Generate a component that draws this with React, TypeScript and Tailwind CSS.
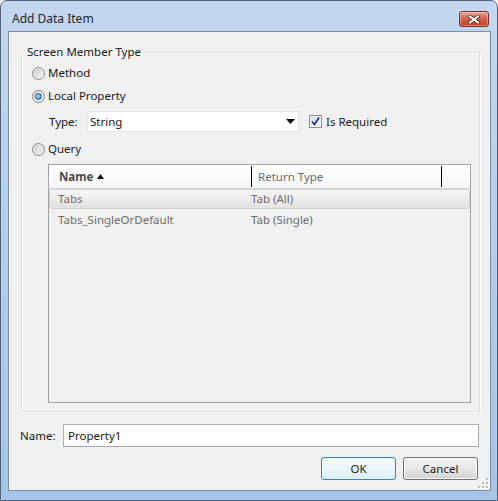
import React from 'react';

function Radio({ checked }: { checked?: boolean }) {
  return (
    <span className="flex h-[13px] w-[13px] shrink-0 items-center justify-center rounded-full border border-[#868787] bg-gradient-to-br from-[#c8c8c8] to-[#f8f8f8] shadow-[inset_0_0_0_1px_#eeeeee]">
      {checked && (
        <span className="h-[7px] w-[7px] rounded-full border border-[#1c5f9e] bg-[radial-gradient(circle_at_35%_35%,#a9dcfa,#2a7bc4)]" />
      )}
    </span>
  );
}

function RadioRow({ label, checked, className }: { label: string; checked?: boolean; className: string }) {
  return (
    <div className={`flex h-[18px] items-center gap-[3px] ${className}`}>
      <Radio checked={checked} />
      <span>{label}</span>
    </div>
  );
}

function CloseButton() {
  return (
    <div className="flex h-[16px] w-[30px] items-center justify-center rounded-[3px] border border-[#7a2e22] bg-gradient-to-b from-[#e7a89a] via-[#d0604a] to-[#c33e25] shadow-[inset_0_0_0_1px_rgba(255,255,255,0.35)]">
      <svg width="12" height="9" viewBox="0 0 12 9">
        <path d="M2 1.5 L10 7.5 M10 1.5 L2 7.5" stroke="#5a2319" strokeWidth="3.6" strokeLinecap="square" />
        <path d="M2 1.5 L10 7.5 M10 1.5 L2 7.5" stroke="#ffffff" strokeWidth="2" strokeLinecap="square" />
      </svg>
    </div>
  );
}

function ResizeGrip() {
  const dots = [
    [8, 0],
    [4, 4],
    [8, 4],
    [0, 8],
    [4, 8],
    [8, 8],
  ];
  return (
    <svg width="11" height="11" viewBox="0 0 11 11" className="absolute bottom-[1px] right-[1px]">
      {dots.map(([x, y], i) => (
        <g key={i}>
          <rect x={x + 1} y={y + 1} width="2" height="2" fill="#ffffff" />
          <rect x={x} y={y} width="2" height="2" fill="#b8bcc2" />
        </g>
      ))}
    </svg>
  );
}

export default function App() {
  return (
    <div className="h-[501px] w-[498px] font-['Noto_Sans',sans-serif] text-[11.5px] leading-[16px] text-[#1a1a1a]">
      <div className="flex h-full w-full flex-col rounded-t-[7px] border border-[#4f6278] bg-gradient-to-b from-[#c4d9ef] via-[#b3cdea] to-[#a6c5e8]">
        {/* Title bar */}
        <div className="flex h-[30px] items-center pl-[11px] pr-[8px] pt-[6px]">
          <span className="flex-1 text-[12px] text-[#1b2633]">Add Data Item</span>
          <CloseButton />
        </div>

        {/* Client area */}
        <div className="relative mb-[9px] ml-[7px] mr-[6px] flex flex-1 flex-col border border-[#7d8da0] bg-[#f0f0f0]">
          <fieldset className="ml-[12px] mr-[10px] mt-[12px] border border-[#d5dfe5] shadow-[inset_1px_1px_0_#ffffff,1px_1px_0_#ffffff]">
            <legend className="ml-[2px] px-[3px]">Screen Member Type</legend>
            <div className="flex flex-col pb-[8px] pl-[10px] pr-[8px]">
              <RadioRow label="Method" className="mt-[4px]" />
              <RadioRow label="Local Property" checked className="mt-[5px]" />

              <div className="mt-[6px] flex h-[21px] items-center pl-[17px]">
                <span className="w-[38px]">Type:</span>
                <div className="flex h-[21px] w-[212px] items-center border border-[#e2e6ea] bg-white pl-[2px] pr-[3px]">
                  <span className="flex-1">String</span>
                  <svg width="9" height="5" viewBox="0 0 9 5">
                    <path d="M0 0 H9 L4.5 5 Z" fill="#000000" />
                  </svg>
                </div>
                <div className="ml-[10px] flex h-[13px] w-[13px] items-center justify-center border border-[#8f8f8f] bg-gradient-to-br from-[#dcdcdc] to-[#fbfbfb] shadow-[inset_0_0_0_1px_#f4f4f4]">
                  <svg width="9" height="9" viewBox="0 0 9 9">
                    <path d="M1 4.5 L3.5 7.5 L8 0.5" stroke="#23329a" strokeWidth="1.8" fill="none" />
                  </svg>
                </div>
                <span className="ml-[4px]">Is Required</span>
              </div>

              <RadioRow label="Query" className="mt-[8px]" />

              {/* List view */}
              <div className="ml-[16px] mt-[6px] flex h-[239px] flex-col border border-[#a0a4aa] bg-[#f0f0f0] text-[#6d6d6d]">
                <div className="flex h-[24px] items-center border-b border-[#d5d5d5] bg-gradient-to-b from-[#ffffff] to-[#f4f5f6]">
                  <div className="flex w-[202px] items-center gap-[4px] pl-[10px] font-bold text-[#4a4a4a]">
                    <span>Name</span>
                    <svg width="7" height="5" viewBox="0 0 7 5">
                      <path d="M0 5 L3.5 0 L7 5 Z" fill="#111111" />
                    </svg>
                  </div>
                  <div className="h-[21px] w-[1px] bg-black" />
                  <div className="w-[189px] pl-[6px]">Return Type</div>
                  <div className="h-[21px] w-[1px] bg-black" />
                </div>
                <div className="flex h-[20px] items-center rounded-[2px] border border-[#d4d4d4] bg-gradient-to-b from-[#f6f6f6] to-[#e2e2e2]">
                  <span className="w-[201px] pl-[8px]">Tabs</span>
                  <span>Tab (All)</span>
                </div>
                <div className="mt-[1px] flex h-[20px] items-center border border-transparent">
                  <span className="w-[201px] pl-[8px]">Tabs_SingleOrDefault</span>
                  <span>Tab (Single)</span>
                </div>
              </div>
            </div>
          </fieldset>

          {/* Name row */}
          <div className="ml-[11px] mr-[11px] mt-[12px] flex h-[23px] items-center">
            <span className="w-[43px]">Name:</span>
            <div className="flex h-[23px] flex-1 items-center border border-[#abadb3] bg-white pl-[4px]">
              Property1
            </div>
          </div>

          {/* Buttons */}
          <div className="mr-[12px] mt-[10px] flex justify-end gap-[7px]">
            <button className="h-[23px] w-[75px] rounded-[3px] border border-[#3c7fb1] bg-gradient-to-b from-[#f8fcfe] via-[#eef7fc] to-[#d9edf8] shadow-[inset_0_0_0_1px_#e6f4fc]">
              OK
            </button>
            <button className="h-[23px] w-[75px] rounded-[3px] border border-[#707070] bg-gradient-to-b from-[#f2f2f2] via-[#e8e8e8] to-[#d2d2d2] shadow-[inset_0_0_0_1px_#fbfbfb]">
              Cancel
            </button>
          </div>

          <ResizeGrip />
        </div>
      </div>
    </div>
  );
}
